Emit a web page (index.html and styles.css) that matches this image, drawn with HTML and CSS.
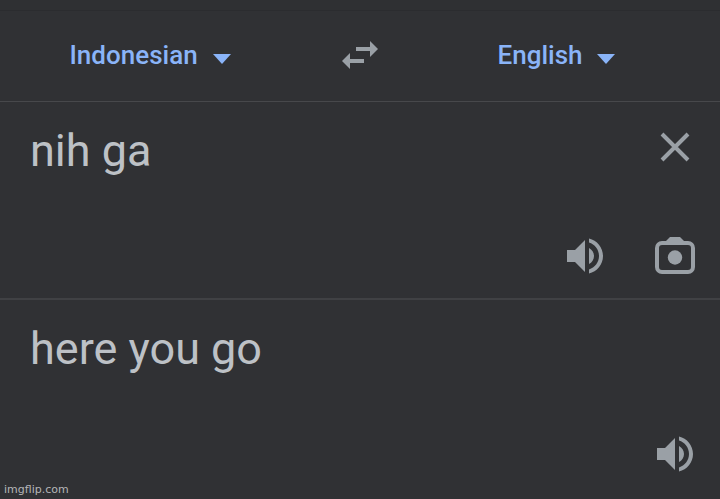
FILE: index.html
```html
<!DOCTYPE html>
<html lang="en">
<head>
<meta charset="utf-8">
<meta name="viewport" content="width=device-width, initial-scale=1">
<title>Translate</title>
<link rel="stylesheet" href="styles.css">
</head>
<body>
<main class="translator">
  <header class="languages">
    <label class="language">
      <select class="language-select" aria-label="Source language"><option>Indonesian</option></select>
      <svg class="caret" viewBox="0 0 18 10" aria-hidden="true"><path d="M0 0h18L9 10z"/></svg>
    </label>
    <button class="icon-button swap" type="button" aria-label="Swap languages">
      <svg width="36" height="28" viewBox="0 0 36 28" aria-hidden="true"><path d="M14 6h14V0l8 8-8 8v-6H14zM22 18H8v-6l-8 8 8 8v-6h14z"/></svg>
    </button>
    <label class="language language-target">
      <select class="language-select" aria-label="Target language"><option>English</option></select>
      <svg class="caret" viewBox="0 0 18 10" aria-hidden="true"><path d="M0 0h18L9 10z"/></svg>
    </label>
  </header>

  <section class="panel source">
    <div class="entry">
      <textarea class="phrase" rows="1" aria-label="Source text" spellcheck="false">nih ga</textarea>
      <button class="icon-button" type="button" aria-label="Clear text">
        <svg width="40" height="40" viewBox="0 0 40 40" aria-hidden="true"><path class="stroke" d="M7 7l26 26M33 7L7 33"/></svg>
      </button>
    </div>
    <div class="actions">
      <button class="icon-button" type="button" aria-label="Listen to source text">
        <svg width="40" height="40" viewBox="2 2 20 20" aria-hidden="true"><path d="M3 9v6h4l5 5V4L7 9H3zm13.500 3c0-1.770-1.020-3.290-2.500-4.030v8.050c1.480-.730 2.500-2.250 2.500-4.020zM14 3.230v2.060c2.890.860 5 3.540 5 6.710s-2.110 5.850-5 6.710v2.060c4.010-.910 7-4.490 7-8.770s-2.990-7.860-7-8.770z"/></svg>
      </button>
      <button class="icon-button" type="button" aria-label="Translate from camera">
        <svg width="40" height="40" viewBox="0 0 40 40" aria-hidden="true"><rect class="stroke" x="2" y="7" width="36" height="29" rx="5"/><path d="M10 6l5-5h10l5 5z"/><circle cx="20" cy="21.500" r="7.200"/></svg>
      </button>
    </div>
  </section>

  <section class="panel result">
    <p class="phrase">here you go</p>
    <div class="actions">
      <button class="icon-button" type="button" aria-label="Listen to translation">
        <svg width="40" height="40" viewBox="2 2 20 20" aria-hidden="true"><path d="M3 9v6h4l5 5V4L7 9H3zm13.500 3c0-1.770-1.020-3.290-2.500-4.030v8.050c1.480-.730 2.500-2.250 2.500-4.020zM14 3.230v2.060c2.890.860 5 3.540 5 6.710s-2.110 5.850-5 6.710v2.060c4.010-.910 7-4.490 7-8.770s-2.990-7.860-7-8.770z"/></svg>
      </button>
    </div>
  </section>

  <footer class="credit">imgflip.com</footer>
</main>
</body>
</html>
```
FILE: styles.css
```css
* {
  box-sizing: border-box;
}

body {
  margin: 0;
  background: #303134;
  color: #bdc1c6;
  font-family: Roboto, "Liberation Sans", sans-serif;
}

.translator {
  position: relative;
  min-height: 100vh;
  border-top: 10px solid #2f3033;
}

.languages {
  display: grid;
  grid-template-columns: 5fr 2fr 5fr;
  align-items: center;
  height: 92px;
  padding-bottom: 2px;
  border-top: 1px solid #2b2c2f;
  border-bottom: 1px solid #47484b;
}

.language {
  display: flex;
  align-items: center;
  justify-content: center;
  gap: 14px;
}

.language-target {
  padding-right: 28px;
}

.language-select {
  appearance: none;
  padding: 0;
  border: 0;
  background: none;
  color: #8ab4f8;
  font: 500 26px/32px Roboto, "Liberation Sans", sans-serif;
}

.caret {
  width: 18px;
  height: 10px;
  margin-top: 8px;
  fill: #8ab4f8;
}

.icon-button {
  display: flex;
  padding: 0;
  border: 0;
  background: none;
  color: #9aa0a6;
}

.icon-button svg {
  fill: currentColor;
}

.icon-button .stroke {
  fill: none;
  stroke: currentColor;
  stroke-width: 4;
}

.swap {
  justify-self: center;
}

.panel {
  display: flex;
  flex-direction: column;
  justify-content: space-between;
  padding: 20px 25px 22px 30px;
}

.source {
  min-height: 198px;
  border-bottom: 2px solid #404144;
}

.result {
  min-height: 196px;
}

.entry {
  display: flex;
  align-items: flex-start;
  gap: 20px;
}

.entry .icon-button {
  padding-top: 5px;
}

.phrase {
  flex: 1;
  min-width: 0;
  margin: 0;
  padding: 0;
  border: 0;
  background: none;
  color: #bdc1c6;
  font: 400 45px/58px Roboto, "Liberation Sans", sans-serif;
  resize: none;
  overflow: hidden;
}

.actions {
  display: flex;
  justify-content: flex-end;
  gap: 50px;
}

.credit {
  position: absolute;
  left: 4px;
  bottom: 2px;
  color: #b4b5b7;
  font-family: "DejaVu Sans", sans-serif;
  font-size: 11px;
  line-height: 14px;
}
```
